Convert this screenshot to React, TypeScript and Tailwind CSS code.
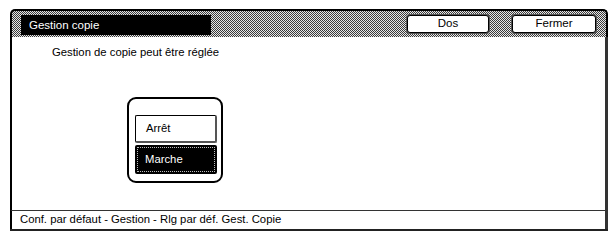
const dither =
  'bg-[repeating-conic-gradient(#3a3a3a_0_25%,#e6e6e6_0_50%)] bg-[length:2px_2px]';

function HeaderButton({ label, width }: { label: string; width: string }) {
  return (
    <div className={`${width} h-[20px] rounded-[4px] bg-[#555] p-[1px]`}>
      <div className="h-full rounded-[3px] border border-black bg-white flex items-center justify-center text-[11.5px] leading-none text-black">
        {label}
      </div>
    </div>
  );
}

export default function App() {
  return (
    <div
      className="w-[612px] h-[234px] bg-white pt-[9px] pl-[10px] overflow-hidden"
      style={{ fontFamily: '"Liberation Sans", Arial, sans-serif' }}
    >
      <div className="w-[598px] h-[222px] flex flex-col">
        {/* Title bar */}
        <div
          className={`h-[28px] shrink-0 rounded-t-[5px] border-t-2 border-x-2 border-black ${dither} flex items-start pt-[3px] pl-[9px] pr-[9px]`}
        >
          <div className="w-[190px] h-[20px] mt-[1px] bg-black text-white text-[11.5px] leading-[20px] pl-[8px]">
            Gestion copie
          </div>
          <div className="flex-1" />
          <HeaderButton label="Dos" width="w-[84px]" />
          <div className="w-[21px]" />
          <HeaderButton label="Fermer" width="w-[86px]" />
        </div>

        {/* Body */}
        <div className="flex-1 border-l-2 border-black border-r-[3px] border-r-[#333] bg-white flex flex-col">
          <div className="pl-[40px] pt-[9px] text-[11.3px] leading-[13px] text-black">
            Gestion de copie peut être réglée
          </div>
          <div className="ml-[115px] mt-[38px] w-[96px] h-[86px] rounded-[9px] border-2 border-black pl-[6px] pt-[16px] flex flex-col gap-[2px]">
            <div className="w-[82px] h-[28px] rounded-[2px] border border-black border-b-2 border-r-2 border-b-[#555] border-r-[#555] bg-white text-[11.3px] leading-none text-black flex items-center pl-[10px]">
              Arrêt
            </div>
            <div className="w-[82px] h-[29px] rounded-[2px] bg-black p-[2px]">
              <div className="h-full border border-dotted border-[#bbb] text-white text-[11.3px] leading-none flex items-center pl-[7px]">
                Marche
              </div>
            </div>
          </div>
        </div>

        {/* Footer */}
        <div className="h-[19px] shrink-0 border-t border-t-[#333] border-l-2 border-black border-r-[3px] border-r-[#333] bg-white text-[11.3px] leading-[17px] text-black pl-[8px]">
          Conf. par défaut - Gestion - Rlg par déf. Gest. Copie
        </div>
        <div className="h-[2px] shrink-0 bg-[#222]" />
      </div>
    </div>
  );
}
